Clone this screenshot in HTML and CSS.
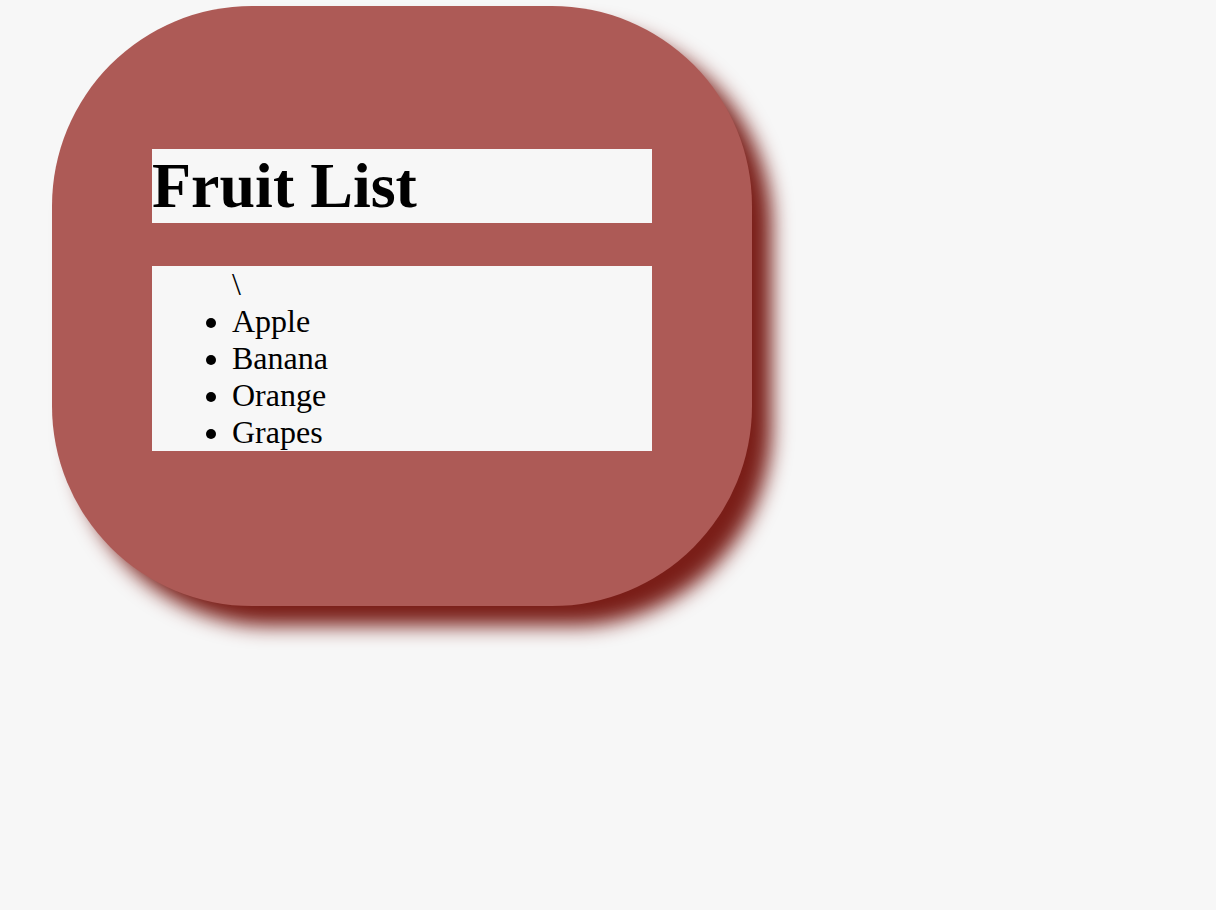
FILE: index.html
```html
<!DOCTYPE html>
<html>
<head>
<meta charset="utf-8">
<link rel="stylesheet" href="styles.css">
</head>
<body>
<div class="card">
  <h1 class="title">Fruit List</h1>
  <ul class="fruits">\
    <li>Apple</li>
    <li>Banana</li>
    <li>Orange</li>
    <li>Grapes</li>
  </ul>
</div>
</body>
</html>
```
FILE: styles.css
```css
html {
  background: #f7f7f7;
  height: 100%;
}
body {
  box-sizing: border-box;
  min-height: 100%;
  margin: 0;
  padding: 6px 0 0 52px;
  font-family: "Liberation Serif", "Times New Roman", serif;
  color: #000;
}
.card {
  box-sizing: content-box;
  width: 500px;
  height: 400px;
  padding: 100px;
  background: #ad5a56;
  border-radius: 200px;
  box-shadow: 20px 20px 20px #7a1e18;
}
.title {
  margin: 0.67em 0;
  font-size: 64px;
  font-weight: bold;
  background: #f7f7f7;
}
.fruits {
  margin: 32px 0;
  padding-left: 80px;
  font-size: 32px;
  background: #f7f7f7;
}
```
